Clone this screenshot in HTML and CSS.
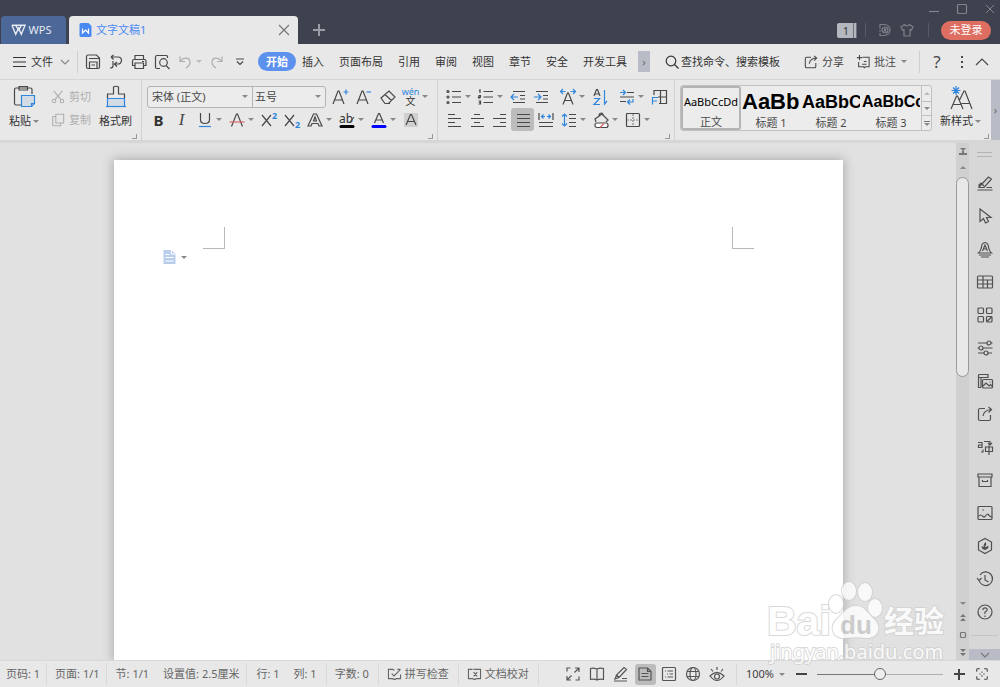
FILE: index.html
```html
<!DOCTYPE html>
<html lang="zh-CN">
<head>
<meta charset="utf-8">
<title>文字文稿1 - WPS</title>
<link rel="stylesheet" href="styles.css">
</head>
<body>
<svg class="sprite" aria-hidden="true">
  <symbol id="close" viewBox="0 0 12 12"><path d="M1 1l10 10M11 1L1 11"/></symbol>
  <symbol id="chev-down" viewBox="0 0 10 6"><path d="M1 1l4 4 4-4"/></symbol>
  <symbol id="save" viewBox="0 0 18 18"><path d="M2.500 4V3.500q0-1.500 1.500-1.500H12.500l3 3v9q0 1.500-1.500 1.500H4Q2.500 15.500 2.500 14zM5.500 15.500V9h7.500v6.500M5 5.500h10M7.500 12h3.500"/></symbol>
  <symbol id="export" viewBox="0 0 18 18"><path d="M4 4h7a3.500 3.500 0 010 7H8M4 4l2.500-2M4 4l2.500 2.500M6 8v5q0 2-3 2M10 9l-2.500 2 2.500 2.500"/></symbol>
  <symbol id="print" viewBox="0 0 18 18"><path d="M5 6V2.500h8.500V6M5 12.500H2.500V8q0-1.500 1.500-1.500h10.500Q16 6.500 16 8v4.500h-2.500M5 10h8.500v5.500H5zM12 8.500h2"/></symbol>
  <symbol id="preview" viewBox="0 0 18 18"><path d="M7 15.500H4Q2.500 15.500 2.500 14V4Q2.500 2.500 4 2.500h9.500q1 0 1 1V5M13 12.500l3.500 3.500"/><circle cx="10.500" cy="9.500" r="3.800"/></symbol>
  <symbol id="undo" viewBox="0 0 18 18"><path d="M4 3.500v5h5M4.500 8C8 3.500 14 4.500 14 9.500q0 3-4 5.500"/></symbol>
  <symbol id="redo" viewBox="0 0 18 18"><path d="M14 3.500v5H9M13.500 8C10 3.500 4 4.500 4 9.500q0 3 4 5.500"/></symbol>
  <symbol id="more" viewBox="0 0 8 8"><path d="M0 1h8M1 3.500L4 6.500 7 3.500"/></symbol>
  <symbol id="search" viewBox="0 0 14 14"><circle cx="6" cy="6" r="4.800"/><path d="M9.500 9.500l4 4"/></symbol>
  <symbol id="share" viewBox="0 0 16 16"><path d="M8 2.500H3Q1.500 2.500 1.500 4v9Q1.500 14.500 3 14.500h9q1.500 0 1.500-1.500V9M6 10q1-6 8-6.500M11.500 1l3 2.500-3 3"/></symbol>
  <symbol id="note" viewBox="0 0 16 16"><path d="M7.500 2.500h7.500v11h-4.500l-1 1-1-1H3V8M4 0v6M1 3h6M7 10.500h5M9 7.500h3"/></symbol>
  <symbol id="paste" viewBox="0 0 24 24"><path d="M9 20H4Q2.500 20 2.500 18.500V4.500Q2.500 3 4 3h14.500Q20 3 20 4.500V9M7 1.500h8.500V5H7z"/><path class="tint" d="M9.500 10.500h13v8l-3 3h-10z"/><path class="blue" d="M22.500 18.500h-3v3"/></symbol>
  <symbol id="cut" viewBox="0 0 16 16"><path d="M3 1l8.500 10M13 1L4.500 11"/><circle cx="3.500" cy="12.500" r="2"/><circle cx="12.500" cy="12.500" r="2"/></symbol>
  <symbol id="copy" viewBox="0 0 16 16"><path d="M5.500 1.500h9v10h-9zM5.500 4H2v10.500h9v-3"/></symbol>
  <symbol id="brush" viewBox="0 0 24 24"><path class="tint" d="M3.500 13.500h17v8h-17z"/><path d="M3.500 13v-4h6V2q2.500-1.500 5 0v7h6v4"/><path class="blue" d="M2 21.500h20"/></symbol>
  <symbol id="font-up" viewBox="0 0 18 18"><path d="M2 16L7 3h1l5 13M4 12h7"/><path class="blue" d="M12.500 4h5M15 1.500v5"/></symbol>
  <symbol id="font-down" viewBox="0 0 18 18"><path d="M2 16L7 3h1l5 13M4 12h7"/><path class="blue" d="M11.500 4h4.500"/></symbol>
  <symbol id="eraser" viewBox="0 0 18 18"><path d="M2 10l8-7 6 6-6.500 6.500H6zM6 6.500l6.500 6M6 15.500h5"/></symbol>
  <symbol id="strike" viewBox="0 0 18 18"><path d="M3.500 15.500L8.500 3h1l5 12.500"/><path class="red" d="M1.500 11h15"/></symbol>
  <symbol id="cross" viewBox="0 0 18 18"><path d="M2 4l9 11M11 4L2 15"/></symbol>
  <symbol id="text-fx" viewBox="0 0 18 18"><path d="M2 15L7.500 3h3L16 15h-3l-1-2.500H6L5 15zM7.500 10L9 6l1.500 4z"/></symbol>
  <symbol id="pen-mark" viewBox="0 0 18 18"><path d="M12 11l4-5"/><path class="thick ink" d="M3 15.500h12"/></symbol>
  <symbol id="font-color" viewBox="0 0 18 18"><path d="M4.500 12L8.500 2.500h1l4 9.500M6 9h6"/><path class="thick pure" d="M3 15.500h12"/></symbol>
  <symbol id="font-shade" viewBox="0 0 18 18"><path class="shade" d="M2 2h14v14H2z"/><path d="M4 14L8.500 3.500h1L14 14M6 10.500h6.500"/></symbol>
  <symbol id="bullets" viewBox="0 0 18 18"><path d="M7 3.500h9M7 9h9M7 14.500h9"/><circle cx="3" cy="3.500" r="1"/><circle cx="3" cy="9" r="1"/><circle cx="3" cy="14.500" r="1"/></symbol>
  <symbol id="numbers" viewBox="0 0 18 18"><path d="M6.500 3.500H16M6.500 9H16M6.500 14.500H16M2 2.500l1-.5v3M1.500 7.500h2v1.300h-2V10h2M1.500 13h2v3h-2M2 14.500h1.500"/></symbol>
  <symbol id="outdent" viewBox="0 0 18 18"><path d="M4 3.500h12M11 7.500h5M11 11h5M4 14.500h12"/><path class="blue" d="M2 9h7M5 6L2 9l3 3"/></symbol>
  <symbol id="indent" viewBox="0 0 18 18"><path d="M4 3.500h12M11 7.500h5M11 11h5M4 14.500h12"/><path class="blue" d="M2 9h7M6 6l3 3-3 3"/></symbol>
  <symbol id="scale" viewBox="0 0 18 18"><path d="M4 16.500L8.500 5h1L14 16.500M6 12.500h6"/><path class="blue" d="M1.500 3.500h5M4 1L1.500 3.500 4 6M11.500 3.500h5M14 1l2.500 2.500L14 6"/></symbol>
  <symbol id="sort" viewBox="0 0 18 18"><path d="M3 8L5.500 1.500h1L9 8M4 6h4"/><path class="blue" d="M3 10.500h5.500L3 16.500h6M13.500 2v14l2.500-3"/></symbol>
  <symbol id="tabs" viewBox="0 0 18 18"><path d="M9 4.500h7M2 9h14M2 13.500h6"/><path class="blue" d="M2 4.500h5M5 2l2.500 2.500L5 7M15 11v3h-5M12 11.500L9.500 14l2.500 2.500"/></symbol>
  <symbol id="grid-f" viewBox="0 0 18 18"><path d="M4 7V2.500h12.500v13H9M10.500 2.500v13M8 9h8.500"/><path class="blue" d="M2.500 16.500v-7H8M2.500 13H7"/></symbol>
  <symbol id="al-left" viewBox="0 0 18 18"><path d="M3 3.500h7M3 7.500h13M3 11.500h7M3 15.500h13"/></symbol>
  <symbol id="al-center" viewBox="0 0 18 18"><path d="M6 3.500h6M3 7.500h13M6 11.500h6M3 15.500h13"/></symbol>
  <symbol id="al-right" viewBox="0 0 18 18"><path d="M9 3.500h6M2 7.500h13M9 11.500h6M2 15.500h13"/></symbol>
  <symbol id="al-just" viewBox="0 0 18 18"><path d="M3 3.500h13M3 7.500h13M3 11.500h13M3 15.500h13"/></symbol>
  <symbol id="al-dist" viewBox="0 0 18 18"><path d="M2 2v7M16 2v7M2 11.500h14M2 15.500h14"/><path class="blue" d="M4 5.500h4M6.500 3.500l-2 2 2 2M10 5.500h4M11.500 3.500l2 2-2 2"/></symbol>
  <symbol id="line-sp" viewBox="0 0 18 18"><path d="M9 3.500h7M9 7.500h7M9 11.500h7M9 15.500h7"/><path class="blue" d="M4.500 3v12M2 5.500L4.500 3 7 5.500M2 12.500L4.500 15 7 12.500"/></symbol>
  <symbol id="bucket" viewBox="0 0 18 18"><path d="M4 11L3 8l7-5 6 6-2 2M7 5q0-3 3-3l2 3"/><rect class="white" x="3" y="12" width="13" height="4.500" rx="2"/><path class="red" d="M8 16.500l4-4"/></symbol>
  <symbol id="borders" viewBox="0 0 18 18"><rect x="2.500" y="2.500" width="13" height="13" rx="1"/><path class="dash" d="M9 3v12M3 9h12"/></symbol>
  <symbol id="new-style" viewBox="0 0 26 26"><path d="M3 24l5.500-13h1L15 24M5 19.500h8M11.500 15l4.500-9h1l7 18M13.500 18.500h8"/><path class="blue" d="M8 1v9M3.500 5.500h9M5 2.500l6 6M11 2.500l-6 6"/></symbol>
  <symbol id="s-pen" viewBox="0 0 18 18"><path d="M3 13L12.500 3l3 2L8 13.500H3zM3 13v-2l2-2 3 3M1.500 16h15M10.500 13.500H16"/></symbol>
  <symbol id="s-arrow" viewBox="0 0 18 18"><path d="M4 2v12.500l3.500-3 2 4.500 3-1.500-2-4h4.500z"/></symbol>
  <symbol id="s-style" viewBox="0 0 18 18"><path d="M2.500 13Q5 11 6 4.500 9 .5 12 4.500 13 11 15.500 13zM6.500 11L9 5l2.500 6M7.500 9h3M3 15h12M5 17h8"/></symbol>
  <symbol id="s-table" viewBox="0 0 18 18"><rect x="1.500" y="3" width="15" height="12" rx="1"/><path d="M2 7h14M2 11h14M7 3v12M11.500 7v8"/></symbol>
  <symbol id="s-grid" viewBox="0 0 18 18"><rect x="2" y="2" width="5.500" height="5.500" rx="1"/><rect x="10.500" y="2" width="5.500" height="5.500" rx="1"/><rect x="2" y="10.500" width="5.500" height="5.500" rx="1"/><rect x="10.500" y="10.500" width="5.500" height="5.500" rx="1"/><path d="M11 15.500l5-5"/></symbol>
  <symbol id="s-sliders" viewBox="0 0 18 18"><path d="M2 4h9M15 4h1.500M1.500 9H3M7 9h9.500M2 14h6M12 14h4"/><circle cx="13" cy="4" r="2"/><circle cx="5" cy="9" r="2"/><circle cx="10" cy="14" r="2"/></symbol>
  <symbol id="s-pic" viewBox="0 0 18 18"><path d="M5 15.500H2.500v-12q0-1 1-1H12V6M2.500 5.500H12M5 5.500v10"/><rect x="6.500" y="7.500" width="10" height="8.500" rx="1"/><path d="M7 14l3-3 3 3 1.500-1.500 2 2M13.500 10h1"/></symbol>
  <symbol id="s-trans" viewBox="0 0 18 18"><path d="M2 4.500h4v5H2.500V7H6M8 3.500h6V7M12 5l2 2 2-2M9.500 9h7v4.500h-7zM13 7.500V17M7 11.500v2.500H5"/></symbol>
  <symbol id="s-box" viewBox="0 0 18 18"><path d="M2 3h14v3H2zM3 6v9.500h12V6M6.500 9v1.500h5V9"/></symbol>
  <symbol id="s-image" viewBox="0 0 18 18"><rect x="2" y="2.500" width="14" height="13" rx="1"/><path d="M2.500 12.500q2-3 4.500 0 1 1 2 0 3-4 4-1l3 2M6.500 6h1.500"/></symbol>
  <symbol id="s-hex" viewBox="0 0 18 18"><path d="M9 1.500L15.500 5v8L9 16.500 2.500 13V5z"/><path class="fill" d="M9.500 5q2 3-1 4.500 2 1 4-1Q13 12 9 13 5.500 12.500 5.500 9l2 1Q7 7 9.500 5z"/></symbol>
  <symbol id="s-history" viewBox="0 0 18 18"><path d="M3 10a6.800 6.800 0 101-5M1 8l2 2.500L5.500 8M9 5v5l3.500 2"/></symbol>
  <symbol id="s-help" viewBox="0 0 18 18"><circle cx="9" cy="9" r="7"/><path d="M6.800 7Q7 4.800 9 4.800q2.200 0 2.200 2Q11.200 8.200 9 9v2M9 12.500V14"/></symbol>
  <symbol id="v-full" viewBox="0 0 16 16"><path d="M10 2h4v4M14 2L9.500 6.500M6 14H2v-4M2 14l4.500-4.500M2 5.500V2h3.500M14 10.500V14h-3.500"/></symbol>
  <symbol id="v-book" viewBox="0 0 16 16"><path d="M8 3Q4 1.500 1.500 2.500v11Q5 12.500 8 14q3-1.500 6.500-.5v-11Q11 1.500 8 3zV14"/></symbol>
  <symbol id="v-edit" viewBox="0 0 16 16"><path d="M2 13l1.500-4L11 1.500l2.500 2L6 11.500zM3.500 9L6 11.500M1 15h13M9 12.500h5"/></symbol>
  <symbol id="v-page" viewBox="0 0 16 16"><path d="M2 2h8.500L14 5.500V14H2zM4.500 7.500h7M4.500 10.500h7M10.500 2v3.500H14"/></symbol>
  <symbol id="v-list" viewBox="0 0 16 16"><rect x="1.500" y="1.500" width="13" height="13" rx="1"/><path d="M6.500 5H12M8.500 8H12M6.500 11H12M4 5h1M6 8h1M4 11h1"/></symbol>
  <symbol id="v-web" viewBox="0 0 16 16"><circle cx="8" cy="8" r="6.500"/><ellipse cx="8" cy="8" rx="3" ry="6.500"/><path d="M2 5.500h12M2 10.500h12"/></symbol>
  <symbol id="v-eye" viewBox="0 0 16 16"><path d="M1 10q7-7 14 0-7 9-14 0zM8 1v3M2 3l2 2.500M14 3l-2 2.500"/><circle cx="8" cy="10.500" r="2.500"/></symbol>
  <symbol id="v-fit" viewBox="0 0 16 16"><path d="M2 5.500V3q0-1 1-1h2.500M10.500 2H13q1 0 1 1v2.500M14 10.500V13q0 1-1 1h-2.500M5.500 14H3q-1 0-1-1v-2.500M8 5v1.500M8 9.500V11M5 8h1.500M9.500 8H11"/></symbol>
  <symbol id="spell" viewBox="0 0 16 14"><path d="M8 2.500L6 1.500H1.500v10H6l2 1 2-1h4.500V7M5 6l2.500 2.500L14 2M11 1.500h3.500"/></symbol>
  <symbol id="proof" viewBox="0 0 16 14"><path d="M6 1.500H1.500v10H6l2 1 2-1h4.500v-10H7M7 4.500L11 9M11 4.500L7 9"/></symbol>
</svg>

<div class="app">
  <header class="titlebar">
    <div class="tabs">
      <button class="tab-home"><svg class="wlogo" viewBox="0 0 16 12"><path d="M1 1h14l-4 9.500L8 4l-3 6.500L1 1M5 1l3 5M11 1L8 7"/></svg>WPS</button>
      <div class="tab-doc">
        <svg class="doclogo" viewBox="0 0 12 14"><path class="doc-bg" d="M1.500 0H9l3 3v9.500q0 1.500-1.500 1.500h-9Q0 14 0 12.500v-11Q0 0 1.500 0z"/><path class="doc-w" d="M3 5.500v4.500l3-3 3 3V5.500"/></svg>
        <span class="tab-name">文字文稿1</span>
        <button class="plain" aria-label="关闭"><svg class="i12 grey"><use href="#close"/></svg></button>
      </div>
      <button class="plain tab-add" aria-label="新建"><svg class="i12" viewBox="0 0 12 12"><path class="bold" d="M6 0v12M0 6h12"/></svg></button>
    </div>
    <div class="title-right">
      <div class="win-controls">
        <button class="plain" aria-label="最小化"><svg class="i10" viewBox="0 0 10 10"><path d="M0 7.500h10"/></svg></button>
        <button class="plain" aria-label="最大化"><svg class="i10" viewBox="0 0 10 10"><rect x=".5" y=".5" width="9" height="9" rx="1"/></svg></button>
        <button class="plain" aria-label="关闭窗口"><svg class="i10" viewBox="0 0 12 12"><path d="M1 1l10 10M11 1L1 11"/></svg></button>
      </div>
      <div class="account">
        <span class="count">1</span><i class="tsep"></i>
        <svg class="i14" viewBox="0 0 14 14"><path d="M2 4V1.500h4.500a5.500 5.500 0 010 11H2V10M1 5h2M1 8h2"/><circle cx="7" cy="7" r="3"/><path d="M5.500 8.500l3-3M6 5l2 4"/></svg>
        <svg class="i14" viewBox="0 0 14 14"><path d="M4.500 1.500q2.500 3 5 0L13 4l-1.500 3-1.500-.5V13H4V6.500L2.500 7 1 4z"/></svg>
        <i class="tsep"></i>
        <button class="login">未登录</button>
      </div>
    </div>
  </header>

  <nav class="menubar">
    <button class="plain file"><svg class="i14" viewBox="0 0 14 14"><path d="M1 2.500h13M1 7h13M1 11.500h13"/></svg>文件<svg class="chev"><use href="#chev-down"/></svg></button>
    <i class="msep"></i>
    <div class="quick">
      <button class="slot" aria-label="保存"><svg class="i18"><use href="#save"/></svg></button>
      <button class="slot" aria-label="输出"><svg class="i18"><use href="#export"/></svg></button>
      <button class="slot" aria-label="打印"><svg class="i18"><use href="#print"/></svg></button>
      <button class="slot" aria-label="打印预览"><svg class="i18"><use href="#preview"/></svg></button>
      <button class="slot drop off" aria-label="撤销"><svg class="i18"><use href="#undo"/></svg><i class="caret"></i></button>
      <button class="slot off" aria-label="恢复"><svg class="i18"><use href="#redo"/></svg></button>
      <button class="slot" aria-label="更多"><svg class="i8"><use href="#more"/></svg></button>
    </div>
    <div class="menu-tabs">
      <button class="plain active">开始</button><button class="plain">插入</button><button class="plain">页面布局</button><button class="plain">引用</button><button class="plain">审阅</button><button class="plain">视图</button><button class="plain">章节</button><button class="plain">安全</button><button class="plain">开发工具</button>
    </div>
    <button class="plain tabs-next" aria-label="下一个">›</button>
    <button class="plain find"><svg class="i14"><use href="#search"/></svg>查找命令、搜索模板</button>
    <div class="menu-right">
      <button class="plain with-icon"><svg class="i14"><use href="#share"/></svg>分享</button>
      <button class="plain with-icon"><svg class="i14"><use href="#note"/></svg>批注<i class="caret"></i></button>
      <i class="msep"></i>
      <button class="plain help" aria-label="帮助">?</button>
      <button class="plain" aria-label="选项"><svg class="dots" viewBox="0 0 4 14"><path class="fill" d="M1 1h2v2H1zM1 6h2v2H1zM1 11h2v2H1z"/></svg></button>
      <button class="plain" aria-label="收起功能区"><svg class="i12" viewBox="0 0 12 12"><path d="M0 9l6-6 6 6"/></svg></button>
    </div>
  </nav>

  <section class="ribbon">
    <div class="group">
      <div class="clip">
        <button class="big"><svg class="i24"><use href="#paste"/></svg><span>粘贴<i class="caret"></i></span></button>
        <div class="stack off">
          <button class="plain"><svg class="i14"><use href="#cut"/></svg>剪切</button>
          <button class="plain"><svg class="i14"><use href="#copy"/></svg>复制</button>
        </div>
        <button class="big"><svg class="i24"><use href="#brush"/></svg><span>格式刷</span></button>
      </div>
      <i class="launcher"></i>
    </div>
    <div class="group font-group">
      <div class="row wide">
        <div class="combos">
          <label class="combo family"><select aria-label="字体"><option>宋体 (正文)</option></select><i class="caret"></i></label>
          <label class="combo size"><select aria-label="字号"><option>五号</option></select><i class="caret"></i></label>
        </div>
        <button class="slot" aria-label="增大字号"><svg class="i18"><use href="#font-up"/></svg></button>
        <button class="slot" aria-label="减小字号"><svg class="i18"><use href="#font-down"/></svg></button>
        <button class="slot" aria-label="清除格式"><svg class="i18"><use href="#eraser"/></svg></button>
        <button class="slot drop pinyin" aria-label="拼音指南"><span class="ruby"><span class="py">wén</span><span class="wen">文</span></span><i class="caret"></i></button>
      </div>
      <div class="row">
        <button class="slot b">B</button>
        <button class="slot it">I</button>
        <button class="slot drop" aria-label="下划线"><svg class="i18" viewBox="0 0 18 18"><path d="M4.500 2v6.500q0 4 4.500 4t4.500-4V2"/><path class="blue" d="M3 15.500h12"/></svg><i class="caret"></i></button>
        <button class="slot drop" aria-label="删除线"><svg class="i18"><use href="#strike"/></svg><i class="caret"></i></button>
        <button class="slot" aria-label="上标"><svg class="i18" viewBox="0 0 18 18"><use href="#cross"/><text class="idx" x="12" y="8">2</text></svg></button>
        <button class="slot" aria-label="下标"><svg class="i18" viewBox="0 0 18 18"><use href="#cross"/><text class="idx" x="12" y="17">2</text></svg></button>
        <button class="slot drop" aria-label="文字效果"><svg class="i18"><use href="#text-fx"/></svg><i class="caret"></i></button>
        <button class="slot drop" aria-label="突出显示"><svg class="i18" viewBox="0 0 18 18"><text class="ab" x="1" y="12">ab</text><use href="#pen-mark"/></svg><i class="caret"></i></button>
        <button class="slot drop" aria-label="字体颜色"><svg class="i18"><use href="#font-color"/></svg><i class="caret"></i></button>
        <button class="slot" aria-label="字符底纹"><svg class="i18"><use href="#font-shade"/></svg></button>
      </div>
      <i class="launcher"></i>
    </div>
    <div class="group para-group">
      <div class="row">
        <button class="slot drop" aria-label="项目符号"><svg class="i18"><use href="#bullets"/></svg><i class="caret"></i></button>
        <button class="slot drop" aria-label="编号"><svg class="i18"><use href="#numbers"/></svg><i class="caret"></i></button>
        <button class="slot" aria-label="减少缩进"><svg class="i18"><use href="#outdent"/></svg></button>
        <button class="slot spaced" aria-label="增加缩进"><svg class="i18"><use href="#indent"/></svg></button>
        <button class="slot drop" aria-label="字符缩放"><svg class="i18"><use href="#scale"/></svg><i class="caret"></i></button>
        <button class="slot spaced" aria-label="排序"><svg class="i18"><use href="#sort"/></svg></button>
        <button class="slot drop" aria-label="制表位"><svg class="i18"><use href="#tabs"/></svg><i class="caret"></i></button>
        <button class="slot" aria-label="表格"><svg class="i18"><use href="#grid-f"/></svg></button>
      </div>
      <div class="row">
        <button class="slot" aria-label="左对齐"><svg class="i18"><use href="#al-left"/></svg></button>
        <button class="slot" aria-label="居中"><svg class="i18"><use href="#al-center"/></svg></button>
        <button class="slot" aria-label="右对齐"><svg class="i18"><use href="#al-right"/></svg></button>
        <button class="slot on" aria-label="两端对齐"><svg class="i18"><use href="#al-just"/></svg></button>
        <button class="slot" aria-label="分散对齐"><svg class="i18"><use href="#al-dist"/></svg></button>
        <button class="slot drop" aria-label="行距"><svg class="i18"><use href="#line-sp"/></svg><i class="caret"></i></button>
        <button class="slot drop" aria-label="底纹"><svg class="i18"><use href="#bucket"/></svg><i class="caret"></i></button>
        <button class="slot drop" aria-label="边框"><svg class="i18"><use href="#borders"/></svg><i class="caret"></i></button>
      </div>
      <i class="launcher"></i>
    </div>
    <div class="group style-group">
      <div class="styles">
        <div class="gallery">
          <button class="style chosen"><span class="sample body">AaBbCcDd</span><span class="label">正文</span></button>
          <button class="style"><span class="sample h1">AaBb</span><span class="label">标题 1</span></button>
          <button class="style"><span class="sample h2">AaBbC</span><span class="label">标题 2</span></button>
          <button class="style"><span class="sample h3">AaBbCc</span><span class="label">标题 3</span></button>
          <div class="gal-nav">
            <button class="plain off" aria-label="上一行"><i class="caret up"></i></button>
            <button class="plain" aria-label="下一行"><i class="caret"></i></button>
            <button class="plain" aria-label="展开"><i class="bar"></i><i class="caret"></i></button>
          </div>
        </div>
        <button class="big new"><svg class="i26"><use href="#new-style"/></svg><span>新样式<i class="caret"></i></span></button>
      </div>
      <i class="launcher"></i>
    </div>
    <button class="plain ribbon-next" aria-label="更多">›</button>
  </section>

  <main class="work">
    <div class="canvas">
      <article class="page">
        <div class="corners"><i class="corner tl"></i><i class="corner tr"></i></div>
        <button class="plain smart" aria-label="文档选项"><svg class="doclogo" viewBox="0 0 12 14"><path class="soft" d="M0 0h8l4 4v10H0z"/><path class="doc-w" d="M2 4.500h4M2 7.500h8M2 11h8M8 0v4h4"/></svg><i class="caret"></i></button>
      </article>
    </div>
    <div class="vscroll">
      <svg class="ruler" viewBox="0 0 8 8"><path class="fill" d="M1 0h6L4 3zM3 3h2v2H3zM0 5h8v2H0z"/></svg>
      <i class="caret up"></i>
      <div class="thumb"></div>
      <div class="vnav">
        <i class="caret"></i>
        <svg class="i8" viewBox="0 0 8 8"><path class="fill" d="M4 0l3 3H1zM4 4l3 3H1z"/></svg>
        <svg class="i8" viewBox="0 0 8 8"><rect x="1.500" y="1.500" width="5" height="5" rx="1"/></svg>
        <svg class="i8" viewBox="0 0 8 8"><path class="fill" d="M4 4l3-3H1zM4 8l3-3H1z"/></svg>
      </div>
    </div>
    <aside class="side">
      <i class="grip"></i>
      <button class="sbtn" aria-label="样式"><svg class="i18"><use href="#s-pen"/></svg></button>
      <button class="sbtn" aria-label="选择"><svg class="i18"><use href="#s-arrow"/></svg></button>
      <button class="sbtn" aria-label="文字"><svg class="i18"><use href="#s-style"/></svg></button>
      <button class="sbtn" aria-label="表格"><svg class="i18"><use href="#s-table"/></svg></button>
      <button class="sbtn" aria-label="应用"><svg class="i18"><use href="#s-grid"/></svg></button>
      <button class="sbtn" aria-label="属性"><svg class="i18"><use href="#s-sliders"/></svg></button>
      <button class="sbtn" aria-label="素材"><svg class="i18"><use href="#s-pic"/></svg></button>
      <button class="sbtn" aria-label="分享"><svg class="i16"><use href="#share"/></svg></button>
      <button class="sbtn" aria-label="翻译"><svg class="i18"><use href="#s-trans"/></svg></button>
      <button class="sbtn" aria-label="备份"><svg class="i18"><use href="#s-box"/></svg></button>
      <button class="sbtn" aria-label="图片"><svg class="i18"><use href="#s-image"/></svg></button>
      <button class="sbtn" aria-label="推荐"><svg class="i18"><use href="#s-hex"/></svg></button>
      <button class="sbtn" aria-label="历史"><svg class="i18"><use href="#s-history"/></svg></button>
      <button class="sbtn" aria-label="帮助"><svg class="i18"><use href="#s-help"/></svg></button>
      <i class="side-rule"></i>
      <button class="plain side-more" aria-label="更多"><svg class="chev"><use href="#chev-down"/></svg></button>
    </aside>
    <svg class="watermark" viewBox="0 0 184 90" aria-hidden="true">
      <text class="wm-name" x="0" y="55">Bai</text>
      <g class="wm-paw"><ellipse cx="69" cy="24" rx="7" ry="9"/><ellipse cx="82" cy="11" rx="7" ry="9"/><ellipse cx="98" cy="12" rx="7" ry="9"/><ellipse cx="108" cy="28" rx="7" ry="9"/><path d="M89 26c9 0 12 8 18 13 9 9 3 20-8 19-7-1-13-1-20 0-12 1-18-10-9-19 6-5 10-13 19-13z"/></g>
      <text class="wm-du" x="73" y="54">du</text>
      <text class="wm-cn" x="117" y="52">经验</text>
      <text class="wm-url" x="3" y="79">jingyan.baidu.com</text>
    </svg>
  </main>

  <footer class="status">
    <span class="cell">页码: 1</span>
    <span class="cell">页面: 1/1</span>
    <span class="cell pair"><span>节: 1/1</span><span>设置值: 2.5厘米</span></span>
    <span class="cell pair"><span>行: 1</span><span>列: 1</span></span>
    <span class="cell">字数: 0</span>
    <button class="cell"><svg class="check"><use href="#spell"/></svg>拼写检查</button>
    <button class="cell"><svg class="check"><use href="#proof"/></svg>文档校对</button>
    <div class="views">
      <button class="view" aria-label="全屏"><svg class="i16"><use href="#v-full"/></svg></button>
      <button class="view" aria-label="阅读版式"><svg class="i16"><use href="#v-book"/></svg></button>
      <button class="view" aria-label="写作模式"><svg class="i16"><use href="#v-edit"/></svg></button>
      <button class="view on" aria-label="页面视图"><svg class="i16"><use href="#v-page"/></svg></button>
      <button class="view" aria-label="大纲"><svg class="i16"><use href="#v-list"/></svg></button>
      <button class="view" aria-label="Web版式"><svg class="i16"><use href="#v-web"/></svg></button>
      <button class="view" aria-label="护眼模式"><svg class="i16"><use href="#v-eye"/></svg></button>
    </div>
    <div class="zoom">
      <button class="plain pct">100%<i class="caret"></i></button>
      <button class="plain" aria-label="缩小"><svg class="i12" viewBox="0 0 12 12"><path class="bold" d="M1 6h11"/></svg></button>
      <input type="range" min="0" max="100" value="50" aria-label="显示比例">
      <button class="plain" aria-label="放大"><svg class="i12" viewBox="0 0 12 12"><path class="bold" d="M6 1v11M1 6h11"/></svg></button>
      <button class="plain" aria-label="最佳显示比例"><svg class="i14"><use href="#v-fit"/></svg></button>
    </div>
  </footer>
</div>
</body>
</html>
```
FILE: styles.css
```css
* { box-sizing: border-box; }
body { margin: 0; }
.sprite { display: none; }
.app {
  display: flex; flex-direction: column; height: 100vh; overflow: hidden;
  background: #e8e8e8; color: #484848;
  font: 11px/16px "Noto Sans", "Noto Sans CJK SC", sans-serif;
}
button, select { font: inherit; color: inherit; border: 0; padding: 0; margin: 0; background: none; }
button { display: flex; align-items: center; justify-content: center; white-space: nowrap; }
i { display: block; flex: none; }
svg { display: block; flex: none; fill: none; stroke: currentColor; stroke-width: 1.2; overflow: visible; }
.i8 { width: 8px; height: 8px; }
.i10 { width: 10px; height: 10px; }
.i12 { width: 12px; height: 12px; }
.i14 { width: 14px; height: 14px; }
.i16 { width: 16px; height: 16px; }
.i18 { width: 18px; height: 18px; }
.i24 { width: 24px; height: 24px; }
.i26 { width: 26px; height: 26px; }
.chev { width: 10px; height: 6px; }
.blue { stroke: #2f86dc; }
.tint { stroke: #2f86dc; fill: #d3dce4; }
.red { stroke: #e06464; }
.thick { stroke-width: 3; stroke-linecap: round; }
.ink { stroke: #000; }
.pure { stroke: #00f; }
.shade { fill: #cfcfcf; stroke: none; }
.white { fill: #fff; }
.dash { stroke-dasharray: 2 1; stroke: #888; }
.fill { fill: currentColor; stroke: none; }
.bold { stroke-width: 2; }
.off { color: #aeaeae; }
.grey { color: #777; }
.caret { width: 0; border: 3px solid transparent; border-top-color: #888; border-bottom: 0; }
.caret.up { border-top: 0; border-bottom: 3px solid #888; }
.off .caret { border-top-color: #bbb; }
.off .caret.up { border-bottom-color: #bbb; }

/* title bar */
.titlebar { display: flex; justify-content: space-between; height: 44px; flex: none; background: #3e424e; color: #9a9da6; }
.tabs { display: flex; align-items: flex-end; padding-left: 1px; }
.tab-home { width: 65px; height: 28px; gap: 3px; margin-right: 3px; padding-right: 5px; background: #4c6899; color: #e6eaf2; border-radius: 4px 4px 0 0; }
.wlogo { width: 15px; height: 12px; stroke-width: 1.5; }
.tab-doc { display: flex; align-items: center; width: 229px; height: 28px; padding: 0 8px 0 10px; background: #e8e8e8; border-radius: 4px 4px 0 0; }
.doclogo { width: 13px; height: 14px; }
.doc-bg { fill: #4a88f2; stroke: none; }
.doc-w { stroke: #fff; }
.soft { fill: #b9cdec; stroke: none; }
.tab-name { flex: 1; padding-left: 4px; color: #4a88f2; }
.tab-add { width: 42px; height: 28px; }
.title-right { display: flex; flex-direction: column; align-items: flex-end; }
.win-controls { display: flex; gap: 18px; height: 17px; padding-right: 5px; color: #81848e; }
.account { display: flex; align-items: center; gap: 8px; height: 26px; padding-right: 9px; color: #7d808a; }
.count { width: 20px; height: 15px; padding-left: 2px; text-align: center; line-height: 15px; background: #b5b7bf; color: #33363f; border-right: 4px double #6e717b; border-radius: 2px 0 0 2px; }
.tsep { width: 1px; height: 14px; background: #565a66; margin-right: 4px; }
.tsep:nth-of-type(2) { margin-left: 6px; }
.account .i14 + .tsep { margin-left: 6px; }
.login { width: 50px; height: 19px; border-radius: 10px; background: #de6d62; color: #fff; }

/* menu bar */
.menubar { display: flex; align-items: center; height: 36px; flex: none; border-bottom: 1px solid #d6d6d6; }
.plain:focus { outline: 1px dotted #888; }
.file { gap: 5px; padding: 0 7px 0 12px; color: #333; }
.file .chev { color: #888; margin-left: 2px; }
.msep { width: 1px; height: 22px; background: #cecece; }
.quick { display: flex; padding-left: 3px; }
.slot { height: 23px; min-width: 23px; }
.drop { width: 32px; justify-content: flex-start; }
.drop .i18 { margin: 0 2px 0 3px; }
.menu-tabs { display: flex; gap: 15px; margin-left: 7px; color: #333; }
.menu-tabs .active { height: 19px; padding: 0 8px; margin-right: -9px; border-radius: 10px; background: #5c91ee; color: #fff; font-weight: bold; }
.tabs-next { width: 12px; height: 21px; margin-left: 11px; background: #b9bcc6; color: #666; }
.find { gap: 2px; margin-left: 15px; color: #333; }
.menu-right { display: flex; align-items: center; gap: 12px; margin-left: auto; padding-right: 12px; }
.with-icon { gap: 4px; }
.with-icon + .msep { margin-right: -2px; }
.with-icon .caret { margin-left: 1px; }
.help { font-size: 17px; width: 14px; margin-right: 4px; }
.dots { width: 4px; height: 14px; }

/* ribbon */
.ribbon { display: flex; height: 63px; flex: none; border-bottom: 3px solid #d6d6d6; }
.group { display: flex; flex-direction: column; padding: 5px 4px 0; border-right: 1px solid #d2d2d2; }
.row { display: flex; align-items: center; height: 23px; }
.launcher { width: 5px; height: 5px; margin: 3px 0 0; align-self: flex-end; border: solid #999; border-width: 0 1px 1px 0; }
.clip { display: flex; height: 46px; padding: 0 5px; }
.big { flex-direction: column; height: 46px; justify-content: space-between; }
.big span { display: flex; align-items: center; gap: 2px; height: 20px; color: #333; }
.stack { display: flex; flex-direction: column; padding: 0 8px 0 12px; }
.stack button { height: 23px; gap: 4px; }
.font-group { width: 296px; padding-left: 5px; }
.combos { display: flex; width: 179px; height: 22px; margin-right: 2px; border: 1px solid #b4b4b4; border-radius: 3px; background: #ececec; }
.combo { display: flex; align-items: center; padding: 0 4px 0 4px; }
.combo select { appearance: none; flex: 1; min-width: 0; height: 20px; }
.family { flex: 1; border-right: 1px solid #b4b4b4; }
.size { width: 72px; padding-left: 2px; }
.wide .slot { width: 24px; }
.wide .drop { width: 33px; }
.ruby { display: flex; flex-direction: column; align-items: center; width: 21px; margin-right: 1px; }
.py { height: 9px; font-size: 9px; line-height: 9px; color: #2f86dc; }
.wen { height: 10px; font-size: 10px; line-height: 10px; color: #333; }
.b { font-weight: bold; font-size: 15px; color: #333; }
.it { font: italic 17px "Liberation Serif", serif; }
.idx { font-size: 9px; font-weight: bold; fill: #2f86dc; stroke: none; }
.ab { font-size: 12px; fill: #333; stroke: none; }
.para-group { width: 237px; }
.spaced { margin-right: 4px; }
.on { background: #bcbcbc; border-radius: 3px; }
.style-group { flex: 1; padding-left: 5px; padding-right: 2px; border-right: 0; }
.styles { display: flex; }
.gallery { display: grid; grid-template-columns: repeat(4, 60px) 10px; height: 46px; border: 1px solid #c0c0c0; border-radius: 3px; background: #ececec; }
.style { flex-direction: column; align-items: center; overflow: hidden; padding: 0 1px; }
.sample { display: flex; align-items: center; width: 100%; height: 30px; color: #000; }
.label { line-height: 12px; }
.body { justify-content: center; }
.h1, .h2, .h3 { font-family: "Liberation Sans", sans-serif; font-weight: bold; overflow: hidden; }
.h1 { font-size: 22px; }
.h2 { font-size: 18px; }
.h3 { font-size: 16px; }
.chosen { padding: 0; border: 2px solid #b4b4b4; border-radius: 3px; }
.chosen .sample { height: 28px; }
.gal-nav { display: grid; grid-template-rows: repeat(3, 1fr); border-left: 1px solid #c0c0c0; }
.gal-nav button { flex-direction: column; gap: 1px; }
.gal-nav button + button { border-top: 1px solid #c0c0c0; }
.bar { width: 6px; height: 1px; background: #777; }
.new { flex: 1; }
.ribbon-next { width: 9px; background: #b9bcc6; color: #666; }

/* work area */
.work { position: relative; display: flex; flex: 1; min-height: 0; }
.canvas { display: flex; justify-content: center; flex: 1; padding-top: 17px; overflow: hidden; background: #e1e1e1; }
.page { width: 729px; padding: 67px 89px 0; background: #fff; box-shadow: 0 0 10px 1px #aaa; }
.corners { display: flex; justify-content: space-between; }
.corner { width: 22px; height: 22px; border: 0 solid #b8b8b8; border-bottom-width: 1px; }
.tl { border-right-width: 1px; }
.tr { border-left-width: 1px; }
.smart { gap: 5px; margin: 1px 0 0 -40px; }
.vscroll { display: flex; flex-direction: column; align-items: center; width: 13px; padding: 5px 0 4px; background: #d0d0d0; color: #777; }
.ruler { width: 8px; height: 8px; margin-bottom: 10px; }
.thumb { width: 13px; height: 200px; margin-top: 8px; border: 1px solid #999; border-radius: 7px; background: #e8e8e8; }
.vnav { display: flex; flex-direction: column; align-items: center; gap: 9px; margin-top: auto; }
.side { display: flex; flex-direction: column; align-items: center; width: 31px; background: #d7d7d7; color: #505050; }
.grip { width: 15px; height: 5px; margin: 9px 0; border: solid #b4b4b4; border-width: 1px 0; }
.sbtn { width: 100%; height: 33px; flex: none; }
.side-rule { width: 27px; height: 1px; margin-top: 7px; background: #c4c4c4; }
.side-more { width: 100%; height: 11px; margin-top: auto; background: #b9bcc6; color: #777; }
.watermark { position: absolute; right: 49px; bottom: -10px; width: 184px; height: 90px; opacity: .8; pointer-events: none; z-index: 1; }
.watermark text, .wm-paw { fill: #fff; stroke: #d0d0d0; stroke-width: 2; paint-order: stroke; }
.wm-name { font: bold 41px "Liberation Sans", sans-serif; }
.watermark .wm-du { font: bold 26px "Liberation Sans", sans-serif; fill: #c8c8c8; stroke: none; }
.wm-cn { font: bold 30px "Noto Sans CJK SC", sans-serif; }
.wm-url { font: 20px "Noto Sans", sans-serif; }

/* status bar */
.status { display: flex; align-items: center; height: 27px; flex: none; border-top: 1px solid #d8d8d8; color: #666; }
.cell { display: flex; align-items: center; height: 22px; padding: 0 9px 0 8px; gap: 3px; border-right: 1px solid #d8d8d8; white-space: nowrap; }
.cell:first-child { padding: 0 6px; }
.cell:nth-child(2) { padding-right: 6px; }
.pair { gap: 14px; padding-left: 9px; }
.pair:nth-child(3) { padding-right: 7px; }
.check { width: 15px; height: 13px; }
.views { display: flex; gap: 3px; margin-left: auto; padding-right: 8px; border-right: 1px solid #d8d8d8; color: #555; }
.view { width: 21px; height: 21px; }
.zoom { display: flex; align-items: center; gap: 10px; padding: 0 11px 0 9px; color: #444; }
.pct { gap: 5px; }
.zoom input { appearance: none; width: 126px; height: 12px; margin: 0; background: linear-gradient(90deg, #777 50%, #b0b0b0 50%) center / 100% 1px no-repeat; }
.zoom input::-webkit-slider-thumb { appearance: none; width: 12px; height: 12px; border: 1px solid #666; border-radius: 50%; background: #eee; }
```
